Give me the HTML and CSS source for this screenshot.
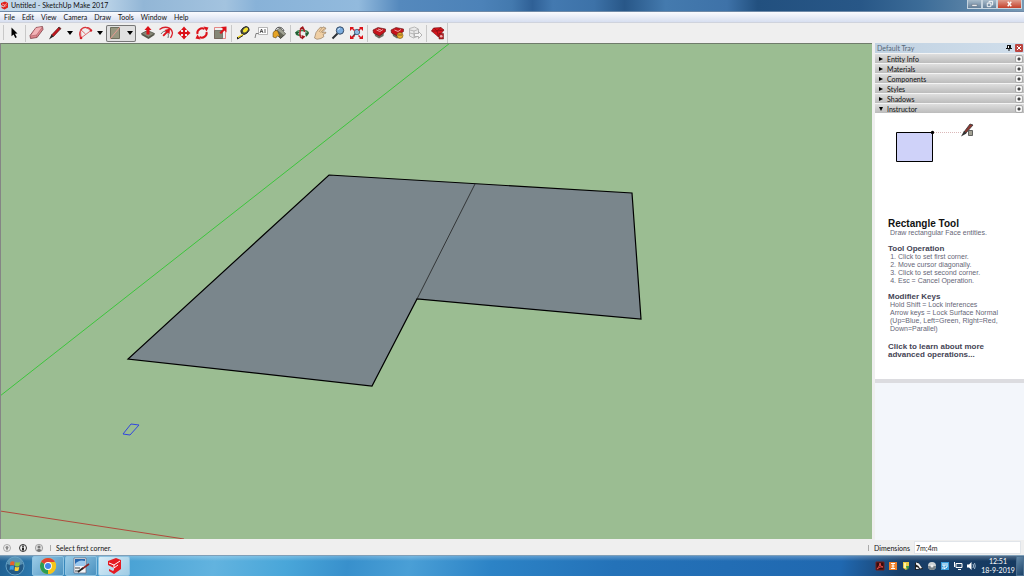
FILE: index.html
```html
<!DOCTYPE html>
<html lang="en">
<head>
  <meta charset="UTF-8">
  <meta name="viewport" content="width=device-width, initial-scale=1.0">
  <link rel="stylesheet" href="styles.css">
  <title>Untitled - SketchUp Make 2017</title>
</head>
<body>
  <header class="titlebar">
    <svg class="app-icon" viewBox="0 0 18 18"><path fill="#e0201c" d="M2 4l8-3 6 3v9l-7 4-6-3v-3l5 2v-2L2 8z"/><path fill="none" stroke="#fff" d="M4 6l5 2 5-3M9 8v3l4-2"/></svg>
    <h1>Untitled - SketchUp Make 2017</h1>
    <div class="window-buttons">
      <button aria-label="Minimize"><svg viewBox="0 0 14 9"><path fill="#fff" stroke="#456" stroke-width=".5" d="M4 5h6v2H4z"/></svg></button>
      <button aria-label="Restore"><svg viewBox="0 0 14 9"><path fill="none" stroke="#fff" d="M6.500 3V1.500h4v4H9M4.500 3.500h4v4h-4z"/></svg></button>
      <button class="close" aria-label="Close"><svg viewBox="0 0 14 9"><path fill="none" stroke="#fff" stroke-width="1.500" d="M5 2l4 5M9 2L5 7"/></svg></button>
    </div>
  </header>

  <nav class="menubar">
    <button>File</button>
    <button>Edit</button>
    <button>View</button>
    <button>Camera</button>
    <button>Draw</button>
    <button>Tools</button>
    <button>Window</button>
    <button>Help</button>
  </nav>

  <div class="toolbar">
    <button class="tool" aria-label="Select"><svg viewBox="0 0 18 18"><path fill="#000" d="M6.500 3.500l6 6-2.500.2 1.800 3.500-1.500.8-1.700-3.500-2.100 1.700z"/></svg></button>
    <span class="sep"></span>
    <button class="tool" aria-label="Eraser"><svg viewBox="0 0 18 18"><path fill="#e0858c" stroke="#7d4046" stroke-width=".8" d="M8 3.500l6.500-1 .5 3-6 8-6.500 1-.5-3z"/><path fill="#f3b3b7" d="M8 4l6-1-5.500 8-5.500.8z"/><path fill="none" stroke="#a8646a" stroke-width=".6" d="M2.500 12l6-1 .5 2.500M8.500 11l6-8"/></svg></button>
    <button class="tool" aria-label="Line"><svg viewBox="0 0 18 18"><path fill="#c3161c" stroke="#4d1111" stroke-width=".6" d="M13 3l2 1.500-7.500 8-2-1.500z"/><path fill="#222" d="M5.500 10.500l2 2-4.500 3z"/><path stroke="#333" d="M12.500 3.500l2 1.500"/></svg></button>
    <button class="caret" aria-label="Line tools"></button>
    <button class="tool" aria-label="Arc"><svg viewBox="0 0 18 18"><path fill="none" stroke="#d8343a" stroke-width="1.300" d="M5 14C2 9 5 3 10 3.500c3 .2 4.500 1.500 5 3"/><path fill="none" stroke="#e0575a" stroke-width=".9" d="M5 14L4.500 5.500l5 4.500M5 14l10-7.500-5-3"/><circle cx="5" cy="14" r="1.300" fill="#d3222a"/><circle cx="15" cy="6.500" r="1.200" fill="#d3222a"/></svg></button>
    <button class="caret" aria-label="Arc tools"></button>
    <div class="active-group">
      <button class="tool" aria-label="Rectangle"><svg viewBox="0 0 18 18"><path fill="#989780" stroke="#70715f" d="M4.500 3.500h9v11h-9z"/><path stroke="#e79a91" d="M4 15l10-12"/></svg></button>
      <button class="caret" aria-label="Shape tools"></button>
    </div>
    <button class="tool" aria-label="Push/Pull"><svg viewBox="0 0 18 18"><path fill="#858675" stroke="#44463c" stroke-width=".7" d="M2.500 9.500l6-3 7 3-6 4z"/><path fill="#555749" d="M2.500 9.500l7 3.500 6-3.500v1.500l-6 4-7-4z"/><path fill="#dc1219" d="M9 2l3.500 4h-2v4.500h-3V6h-2z"/></svg></button>
    <button class="tool" aria-label="Offset"><svg viewBox="0 0 18 18"><path fill="none" stroke="#d8202a" stroke-width="1.300" d="M2.500 5.500c5-4 12-2.500 13 3.500-.3 2-1 3.500-2 5"/><path fill="none" stroke="#555" stroke-width=".8" d="M4 10c3-5 9-3 7 4"/><path fill="#dc1219" d="M13 4.500l-.5 5.500-1.700-1.500-4 4-1.300-1.300 3.700-3.700-1.700-1.500z"/></svg></button>
    <button class="tool" aria-label="Move"><svg viewBox="0 0 18 18"><path fill="#dc1219" d="M9 2.500L12 6h-2v2h2V6l3.500 3-3.500 3v-2h-2v2h2l-3 3.500L6 12h2v-2H6v2L2.500 9 6 6v2h2V6H6z"/></svg></button>
    <button class="tool" aria-label="Rotate"><svg viewBox="0 0 18 18"><path fill="none" stroke="#dc1219" stroke-width="2" d="M4.500 10a4.800 4.500 0 0 1 7-5M13.500 8a4.800 4.500 0 0 1-7 5"/><path fill="#dc1219" d="M10.500 2.500l5 1-2 4zM7.500 15.500l-5-1 2-4z"/></svg></button>
    <button class="tool" aria-label="Scale"><svg viewBox="0 0 18 18"><path fill="none" stroke="#e06a68" stroke-width=".8" d="M3.500 3.500h11v11h-11z"/><path fill="#858675" stroke="#5c5d50" stroke-width=".7" d="M3.500 6.500h8v8h-8z"/><path fill="#dc1219" d="M15.500 2.500v6l-2-2-3.500 3.500-1.500-1.500L12 5l-2-2z"/></svg></button>
    <span class="sep"></span>
    <button class="tool" aria-label="Tape Measure"><svg viewBox="0 0 18 18"><ellipse cx="11" cy="6.500" rx="4.500" ry="3.300" fill="#4b4d3f" stroke="#222" stroke-width=".8" transform="rotate(-40 11 6.500)"/><ellipse cx="11.500" cy="6" rx="3" ry="1.800" fill="#f4e22d" transform="rotate(-40 11.500 6)"/><path stroke="#f4d71c" stroke-width="1.500" d="M9 10.500l-5 3"/><path fill="none" stroke="#222" d="M9 11.500L3.500 15v-2"/></svg></button>
    <button class="tool" aria-label="Text"><svg viewBox="0 0 18 18"><path fill="#fff" stroke="#999" stroke-width=".7" d="M6.500 3.500h9v7h-9z"/><path fill="none" stroke="#666" stroke-width=".8" d="M6.500 9.500H4L3 14"/><path fill="none" stroke="#333" stroke-width=".8" d="M8 9l1.500-4L11 9M8.500 7.500h2M13 5v4"/></svg></button>
    <button class="tool" aria-label="Paint Bucket"><svg viewBox="0 0 18 18"><path fill="none" stroke="#444" d="M5.500 7c0-5 7-5 8.500 0"/><path fill="#66685a" stroke="#2c2d26" stroke-width=".8" d="M5 8l5-4 5.500 6-5 4.500z"/><path fill="#a0a294" d="M10 4l5.500 6-2 1-6-5z"/><path fill="#e6a425" stroke="#4a3512" stroke-width=".5" d="M3 9c1-3 5-3 5-1l2 4.500-3-.5-1 2-3-1z"/></svg></button>
    <span class="sep"></span>
    <button class="tool" aria-label="Orbit"><svg viewBox="0 0 18 18"><path fill="none" stroke="#37834b" stroke-width="1.700" d="M8 11.500c-7-.5-6-5 1-5s7.500 3.500 3.500 4.800"/><path fill="none" stroke="#b3252a" stroke-width="1.500" d="M11.500 8c-.5-5.500-4-5.500-4.500 0s1 6 2.500 5.500"/><path fill="#a0171c" d="M8.500 11l4 1.500-3.500 3zM6.500 4.500L10 2l1.500 4z"/><path fill="#235c33" d="M2 8h4.500L4 11.500zM12 8.500h4L13.500 13z"/></svg></button>
    <button class="tool" aria-label="Pan"><svg viewBox="0 0 18 18"><path fill="#efcfa4" stroke="#8b7052" stroke-width=".6" d="M3.500 14L5 8.500l3-4 2-1.500 1 .8 2-1 .5 1L15 4l-1 1.500-3 3 3.500-.5.5 1-3 1.500 1 2-3 2-4 .8z"/><path fill="none" stroke="#a5835c" stroke-width=".6" d="M8 8l3-4M9.500 8.500l4-4"/></svg></button>
    <button class="tool" aria-label="Zoom"><svg viewBox="0 0 18 18"><path stroke="#2b3036" stroke-width="2" d="M8.500 9.500L3.500 14.500"/><circle cx="11" cy="6.500" r="3.700" fill="#7daee0" stroke="#344a65"/><path fill="none" stroke="#d5e9fa" d="M9 6a2 2 0 0 1 2-1.500"/></svg></button>
    <button class="tool" aria-label="Zoom Extents"><svg viewBox="0 0 18 18"><path stroke="#324050" stroke-width="1.500" d="M9 9l-4 4.500"/><circle cx="10" cy="8" r="2.700" fill="#8fb7df" stroke="#35526f" stroke-width=".8"/><path fill="#dc1219" d="M3 3h4L6 4l2 2-1 1-2-2-2 2zM16 3h-4l1 1-2 2 1 1 2-2 2 2zM3 15h4l-1-1 2-2-1-1-2 2-2-2zM16 15h-4l1-1-2-2 1-1 2 2 2-2z"/></svg></button>
    <span class="sep"></span>
    <button class="tool" aria-label="3D Warehouse"><svg viewBox="0 0 18 18"><path fill="#6d6b5f" d="M4 8l5 3 5-3-.5 4-4.500 2.500L5 12z"/><path fill="#c6141b" stroke="#611014" stroke-width=".6" d="M3 6l5-2.500L15.500 5v2.500L9.500 12 3.500 9z"/><path fill="none" stroke="#efb1b1" stroke-width=".9" d="M6.500 6l3.500 1.500L13 5.500M8 5l3 1"/></svg></button>
    <button class="tool" aria-label="Share Model"><svg viewBox="0 0 18 18"><path fill="#6d6b5f" d="M4 8l5 3 5-3-.5 4-4.500 2.500L5 12z"/><path fill="#c6141b" stroke="#611014" stroke-width=".6" d="M3 6l5-2.500L15.500 5v2.500L9.500 12 3.500 9z"/><path fill="none" stroke="#efb1b1" stroke-width=".9" d="M6.500 6l3.500 1.500L13 5.500"/><circle cx="12" cy="11.500" r="3" fill="#efb32d" stroke="#6d4c10" stroke-width=".6"/><path stroke="#543" stroke-width=".8" d="M11 10v2M13 10v2"/></svg></button>
    <button class="tool" aria-label="Share Component" disabled><svg viewBox="0 0 18 18"><path fill="#e9e9e9" stroke="#aaa" stroke-width=".8" d="M3.500 4.500l5-1.500 4 2v7l-5 2-4-2z"/><path fill="none" stroke="#aaa" stroke-width=".8" d="M4 6l4 1 4-1.500M4 9l4 1M8 7v7"/><path fill="#f5f5f5" stroke="#999" stroke-width=".7" d="M8.500 9.500h4v-2l3.500 3.500-3.500 3.500v-2h-4z"/></svg></button>
    <span class="sep"></span>
    <button class="tool" aria-label="Extension Warehouse"><svg viewBox="0 0 18 18"><path fill="#d8151c" stroke="#740d12" stroke-width=".6" d="M2.500 7l2-3 7.500-.5L15 6l-5.500 7z"/><path fill="none" stroke="#8b1014" stroke-width=".8" d="M2.500 7H8l7-1M8 7l1.500 6M5 4l3 3 4-3.500"/><path fill="#b51e23" stroke="#64110f" stroke-width=".5" d="M10 9.500h4.500v5.500H10z"/><circle cx="12.200" cy="12.300" r="1.300" fill="#efb0b0"/></svg></button>
    <span class="toolbar-end"></span>
  </div>

  <main class="workspace">
    <div class="viewport">
      <svg class="model" viewBox="1 1 871 495" preserveAspectRatio="xMinYMin slice">
        <!-- axes -->
        <path stroke="#3cc53c" d="M450 0L0 353"/>
        <path stroke="#b04a3c" d="M0 468l184 28"/>
        <!-- faces -->
        <path fill="#7a868c" stroke="#000" stroke-width="1.200" d="M329 132l303 18 9 126-224-20-45 87-244-27z"/>
        <path stroke="#222" stroke-width=".8" d="M475 141l-58 115"/>
        <!-- pending rectangle -->
        <path fill="none" stroke="#3045e0" stroke-width="1" d="M131 381l8 1-9 10-7-1z"/>
      </svg>
    </div>

    <aside class="tray">
      <div class="tray-title">
        <h2>Default Tray</h2>
        <button class="pin" aria-label="Pin"><svg viewBox="0 0 8 8"><path fill="#111" d="M2 1h4v3h1v1H4.500v2h-1V5H1V4h1z"/><path fill="#fff" d="M3 2h1v2H3z"/></svg></button>
        <button class="tray-close" aria-label="Close tray"><svg viewBox="0 0 8 8"><path stroke="#fff" d="M2 2l4 4M6 2L2 6"/></svg></button>
      </div>
      <div class="panel-head"><button class="panel-toggle">Entity Info</button><button class="panel-close" aria-label="Close Entity Info"></button></div>
      <div class="panel-head"><button class="panel-toggle">Materials</button><button class="panel-close" aria-label="Close Materials"></button></div>
      <div class="panel-head"><button class="panel-toggle">Components</button><button class="panel-close" aria-label="Close Components"></button></div>
      <div class="panel-head"><button class="panel-toggle">Styles</button><button class="panel-close" aria-label="Close Styles"></button></div>
      <div class="panel-head"><button class="panel-toggle">Shadows</button><button class="panel-close" aria-label="Close Shadows"></button></div>
      <div class="panel-head"><button class="panel-toggle open">Instructor</button><button class="panel-close" aria-label="Close Instructor"></button></div>

      <section class="instructor">
        <svg class="demo" viewBox="0 0 100 50">
          <path fill="#cfd2f9" stroke="#000" d="M8.500 14.500h36v29h-36z"/>
          <circle cx="44.500" cy="14.500" r="1.700"/>
          <path stroke="#c99" stroke-dasharray="1 1" stroke-width=".7" d="M46 14.500h27"/>
          <path fill="#8d3831" stroke="#333" stroke-width=".8" d="M82 6l3 1-7 8-2-1z"/>
          <path fill="#333" d="M76 13l2.500 2.500-5.500 3z"/>
          <path fill="#a3a294" stroke="#444" stroke-width=".8" d="M80.500 12.500h4v5h-4z"/>
        </svg>
        <h3>Rectangle Tool</h3>
        <p>Draw rectangular Face entities.</p>
        <h4>Tool Operation</h4>
        <ol>
          <li>Click to set first corner.</li>
          <li>Move cursor diagonally.</li>
          <li>Click to set second corner.</li>
          <li>Esc = Cancel Operation.</li>
        </ol>
        <h4>Modifier Keys</h4>
        <p>Hold Shift = Lock inferences<br>Arrow keys = Lock Surface Normal<br>(Up=Blue, Left=Green, Right=Red,<br>Down=Parallel)</p>
        <a class="more" href="#">Click to learn about more<br>advanced operations...</a>
      </section>
    </aside>
  </main>

  <footer class="statusbar">
    <button class="status-icon" aria-label="Geo-location"><svg viewBox="0 0 10 10"><circle cx="5" cy="5" r="3.500" fill="none" stroke="#999" stroke-width=".8"/><path fill="#888" d="M5 8L3.500 4.500a1.500 1.500 0 1 1 3 0z"/></svg></button>
    <button class="status-icon" aria-label="Credits"><svg viewBox="0 0 10 10"><circle cx="5" cy="5" r="3.500" fill="none" stroke="#333"/><path fill="#222" d="M4 4.500h2v3H4zM4.200 2.500h1.600v1.500H4.200z"/></svg></button>
    <button class="status-icon" aria-label="Sign in"><svg viewBox="0 0 10 10"><circle cx="5" cy="5" r="3.700" fill="#ddd" stroke="#888" stroke-width=".7"/><circle cx="5" cy="4" r="1.500" fill="#777"/><path fill="#777" d="M2.500 7.500c1-2 4-2 5 0L5 9z"/></svg></button>
    <span class="status-sep"></span>
    <span class="hint">Select first corner.</span>
    <span class="status-sep"></span>
    <label for="dimensions">Dimensions</label>
    <input type="text" id="dimensions" value="7m;4m">
  </footer>

  <div class="taskbar">
    <button class="start" aria-label="Start"><svg viewBox="0 0 20 20"><circle cx="10" cy="10" r="9" fill="#235a86" stroke="#7eb9d8" stroke-width=".7"/><path fill="#71abc8" opacity=".7" d="M2 8a8 7 0 0 1 16 0q-8 3-16 0z"/><path fill="#e9602c" d="M5.500 6q2-1.500 4-.3L9 9.500q-2-1-4 0z"/><path fill="#8ac53e" d="M10.500 6q2 1 4.500 0l-.700 4q-2 1-4.300 0z"/><path fill="#3e9ee2" d="M5 10.300q2-1 4 0L8.500 14q-2-1-4 0z"/><path fill="#fbd034" d="M10 10.800q2 1 4.300 0l-.800 3.700q-2 1-4 0z"/></svg></button>
    <button class="task" aria-label="Chrome"><svg viewBox="0 0 18 18"><circle cx="9" cy="9" r="8" fill="#f5c51b"/><path fill="#df4234" d="M9 9L2.100 5a8 8 0 0 1 13.800 0z"/><path fill="#2b9d54" d="M9 9v8A8 8 0 0 1 2.100 5z"/><path fill="#f5c51b" d="M9 17a8 8 0 0 0 7-12H9l3.500 6z"/><circle cx="9" cy="9" r="3.900" fill="#fff"/><circle cx="9" cy="9" r="3" fill="#4384e8"/></svg></button>
    <button class="task" aria-label="Journal"><svg viewBox="0 0 18 18"><path fill="#f2f6fa" stroke="#667" stroke-width=".7" d="M2 1h12v15H2z"/><path fill="#2565ae" d="M3 2h10v7H3z"/><path fill="#9cc9ef" d="M3 7q4-5 10-3v5H3z"/><path stroke="#444" stroke-width="1" d="M3 11h5M3 14h4"/><path stroke="#8c2526" stroke-width="1.700" d="M17 7l-7 5"/><path stroke="#222" stroke-width="1.700" d="M11 11l-5 4"/></svg></button>
    <button class="task current" aria-label="SketchUp"><svg viewBox="0 0 18 18"><path fill="#e41b22" d="M3 4l8-3 5 2v9l-7 5-5-3v-2l4 2 1-1v-2L3 8z"/><path fill="none" stroke="#fff" d="M4 6l5 2 6-4M9 8v3l4-3"/></svg></button>
    <div class="notification">
      <svg viewBox="0 0 10 10"><path fill="#370c0d" stroke="#75201f" d="M1 1h8v8H1z"/><path fill="none" stroke="#e34944" d="M2 8q3-3 3-6 0 4 3 4-3-1-6 2"/></svg>
      <svg viewBox="0 0 10 10"><path fill="#ef8029" d="M1 1h8v8H1z"/><path fill="none" stroke="#fff" d="M3 2.500h4M5 2.500v5M3 7.500h4M3.500 5h3"/></svg>
      <svg viewBox="0 0 10 10"><path fill="#eccc45" d="M2 1h6v5L5 9 2 7z"/><path fill="#fff3a4" d="M3 2h2v5H3z"/><path fill="#459842" d="M5 5h3v2L6 9z"/></svg>
      <svg viewBox="0 0 10 10"><path fill="#202020" d="M1 2l3-1 5 7-8 1z"/><path fill="#f4f4f4" d="M2 1.500l3 1L8 7l-2 .5L4.500 5 2 3.500zM2 6l2 .5 1 1.500H2z"/></svg>
      <svg viewBox="0 0 10 10"><circle cx="5" cy="5" r="4" fill="#ced3d5"/><path fill="#7b858b" d="M1 5h8a4 4 0 0 1-8 0z"/><circle cx="5" cy="5" r="1.500" fill="#eee"/></svg>
      <svg viewBox="0 0 10 10"><path fill="#3a9edb" d="M1 1h8v8H1z"/><path fill="none" stroke="#fff" d="M3 2v3h2V2M7 2v4L4 8M2 7h3"/></svg>
      <svg viewBox="0 0 10 10"><path fill="#2b4a6a" stroke="#fff" d="M3 2.500h6v4H3z"/><path fill="none" stroke="#fff" d="M1.500 1v5M5 8.500h3"/></svg>
      <svg viewBox="0 0 10 10"><path fill="#fff" d="M1 3.500h2L5.500 1v8L3 6.500H1z"/><path fill="none" stroke="#c9dceb" stroke-width=".8" d="M7 3q1 2 0 4M8.500 2q1.500 3 0 6"/></svg>
    </div>
    <div class="clock"><time>12:51</time><time>18-9-2019</time></div>
    <button class="show-desktop" aria-label="Show desktop"></button>
  </div>
</body>
</html>
```

FILE: styles.css
```css
*, *::before {
  box-sizing: border-box;
}

body {
  margin: 0;
  height: 100vh;
  display: flex;
  flex-direction: column;
  overflow: hidden;
  background-color: #efefef;
  color: #111;
  font-family: Lato, "Open Sans", sans-serif;
  font-size: 7px;
  line-height: 10px;
}

h1, h2, h3, h4, p, ol {
  margin: 0;
  padding: 0;
  font-size: inherit;
  font-weight: normal;
}

button {
  margin: 0;
  padding: 0;
  border: none;
  background: none;
  color: inherit;
  font: inherit;
}

svg {
  display: block;
}

/* title bar */
.titlebar {
  display: flex;
  align-items: flex-start;
  height: 12px;
  padding-right: 2px;
  border-bottom: 1px solid #6f8aa8;
  background: linear-gradient(90deg, #c2d8e9 0, #bdd5e9 10%, #92b6d6 14%, #a3c3df 22%, #88b2d8 25%, #92badd 35%, #5589bd 39%, #4c82b8 47%, #4379ae 50%, #2f6096 52%, #4379b0 54%, #3d72a8 58%, #285788 61%, #447aae 65%, #3e72a8 71%, #22507f 74%, #285787 84%, #3c6c98 90%, #789ab5 100%);
}

.app-icon {
  width: 9px;
  height: 9px;
  margin: 1px 2px 0 0;
}

.titlebar h1 {
  flex: 1;
  line-height: 11px;
}

.window-buttons {
  display: flex;
}

.window-buttons button {
  width: 15px;
  height: 9px;
  border: 1px solid #c6d4df;
  border-top: none;
  background: linear-gradient(#a9bccb, #647f99);
}

.window-buttons .close {
  width: 25px;
  background: linear-gradient(#df9c8c, #c3412b);
}

.window-buttons svg {
  width: 100%;
  height: 8px;
}

/* menu */
.menubar {
  display: flex;
  gap: 7px;
  height: 10px;
  padding-left: 4px;
  background: linear-gradient(#fafbfe, #d7dff0);
}

/* toolbar */
.toolbar {
  display: flex;
  align-items: center;
  height: 21px;
  padding-left: 5px;
  border-top: 1px solid #cfd3dd;
  background: linear-gradient(90deg, #c8c8c8 1px, transparent 1px) 3px 2px / 1px 15px no-repeat, #efefef;
}

.tool {
  width: 18px;
  height: 18px;
}

.tool svg {
  width: 18px;
  height: 18px;
}

.caret {
  width: 12px;
  height: 16px;
}

.caret::before {
  content: "";
  display: block;
  width: 6px;
  margin: 0 auto;
  border: 3px solid transparent;
  border-top: 4px solid #000;
  border-bottom: none;
}

.active-group {
  display: flex;
  align-items: center;
  height: 17px;
  margin-right: 3px;
  border-radius: 2px;
  background-color: #e0e0e0;
  box-shadow: inset 0 0 0 1px #777;
}

.sep {
  width: 1px;
  height: 17px;
  margin: 0 2px;
  background-color: #c8c8c8;
}

.toolbar-end {
  width: 1px;
  height: 20px;
  background-color: #c8c8c8;
}

/* drawing area and tray */
.workspace {
  flex: 1;
  display: flex;
  min-height: 0;
}

.viewport {
  flex: 1;
  min-width: 0;
  margin: 0 3px 1px 0;
  border-top: 1px solid #6f7c6b;
  border-left: 1px solid #858585;
  background-color: #9bbd92;
}

.model {
  width: 100%;
  height: 100%;
}

.tray {
  width: 149px;
  background-color: #f3f6fb;
}

.tray-title {
  display: flex;
  align-items: center;
  gap: 2px;
  height: 10px;
  padding: 0 1px 0 2px;
  background: linear-gradient(90deg, #c1d2e2, #d0deeb);
  color: #567;
}

.tray-title h2 {
  flex: 1;
}

.tray-title svg {
  width: 8px;
  height: 8px;
}

.tray-close {
  border-radius: 1px;
  background-color: #bb4540;
}

.panel-head {
  display: flex;
  align-items: center;
  height: 10px;
  padding-right: 1px;
  border-top: 1px solid #f4f4f4;
  background: linear-gradient(#dedede, #bcbcbc);
}

.panel-toggle {
  flex: 1;
  display: flex;
  align-items: center;
  text-align: left;
}

.panel-toggle::before {
  content: "";
  width: 4px;
  margin: 0 4px 0 4px;
  border: 2px solid transparent;
  border-left: 4px solid #000;
  border-right: none;
}

.panel-toggle.open::before {
  border: 2px solid transparent;
  border-top: 4px solid #000;
  border-bottom: none;
}

.panel-close {
  width: 8px;
  height: 8px;
  border: 1px solid #aaa;
  border-radius: 2px;
  background: radial-gradient(#444 1px, #f4f4f4 2px);
}

/* instructor */
.instructor {
  padding: 5px 13px 20px 13px;
  border-bottom: 4px solid #dcdce0;
  background-color: #fff;
  color: #667;
  font-family: "Liberation Sans", Arial, sans-serif;
  font-size: 7px;
  line-height: 8px;
}

.demo {
  width: 100px;
  height: 50px;
}

.instructor h3 {
  margin-top: 51px;
  color: #111;
  font-size: 10px;
  font-weight: bold;
  line-height: 10px;
}

.instructor p {
  padding-left: 2px;
  white-space: nowrap;
}

.instructor h4 {
  margin-top: 8px;
  color: #445;
  font-size: 8px;
  font-weight: bold;
}

.instructor ol {
  padding-left: 10px;
}

.more {
  display: block;
  margin-top: 10px;
  color: #445;
  font-size: 8px;
  font-weight: bold;
  text-decoration: none;
}

/* status bar */
.statusbar {
  display: flex;
  align-items: center;
  height: 15px;
  padding: 0 3px 0 2px;
  background-color: #efefef;
}

.status-icon {
  width: 10px;
  margin-right: 6px;
}

.status-sep {
  width: 1px;
  height: 6px;
  margin-right: 5px;
  background-color: #aaa;
}

.hint {
  flex: 1;
}

.statusbar input {
  width: 107px;
  height: 13px;
  margin-left: 4px;
  padding: 0 1px;
  border: 1px solid #e1e5ea;
  background-color: #fff;
  color: #222;
  font: inherit;
}

/* taskbar */
.taskbar {
  display: flex;
  align-items: center;
  gap: 1px;
  height: 21px;
  border-top: 1px solid #7f9fb8;
  background: linear-gradient(rgba(255, 255, 255, .25), transparent 5px), linear-gradient(100deg, #1f5f91 0, #2f7db2 4%, #4ba3d5 13%, #62b3df 21%, #49a6d9 28%, #3890cc 34%, #4a9fd6 40%, #2c83c6 48%, #2472b8 60%, #2068b0 82%, #193f69 88%, #15395f 100%);
}

.start {
  width: 29px;
  margin-right: 2px;
}

.start svg {
  width: 20px;
  height: 20px;
  margin: 0 auto;
}

.task {
  width: 32px;
  height: 20px;
  border: 1px solid #8dc3e2;
  border-radius: 2px;
  background: linear-gradient(135deg, #9acbe7, #4b92c0);
}

.task.current {
  background: linear-gradient(135deg, #d8edf8, #9fcce5);
}

.task svg {
  width: 18px;
  height: 18px;
  margin: 0 auto;
}

.notification {
  display: flex;
  gap: 3px;
  margin-left: auto;
}

.notification svg {
  width: 10px;
  height: 10px;
}

.clock {
  display: flex;
  flex-direction: column;
  width: 38px;
  padding-left: 4px;
  line-height: 9px;
  text-align: center;
  color: #fff;
}

.show-desktop {
  width: 8px;
  height: 20px;
  border: 1px solid #4a6f90;
  background: linear-gradient(135deg, #6389a9, #1b4268);
}
```
